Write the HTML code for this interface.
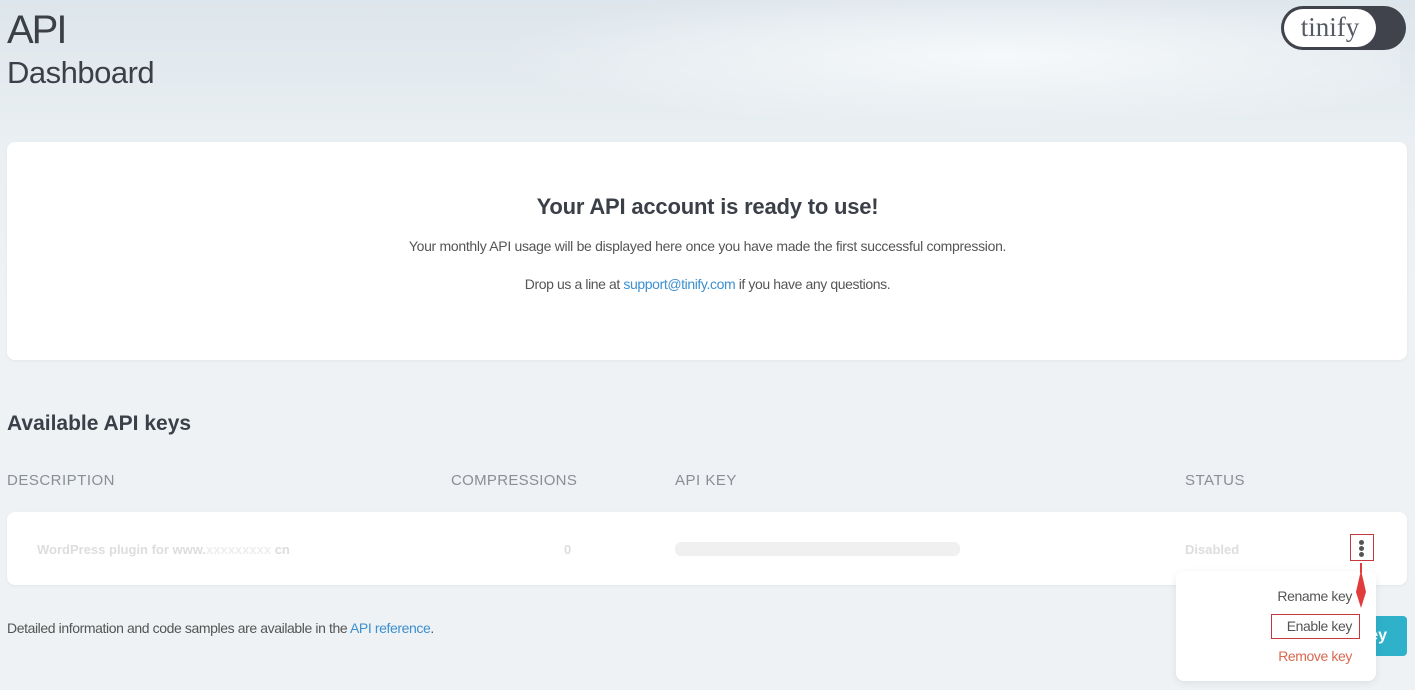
<!DOCTYPE html>
<html><head><meta charset="utf-8"><style>
*{box-sizing:border-box;margin:0;padding:0}
body{width:1415px;height:690px;overflow:hidden;font-family:"Liberation Sans",sans-serif;color:#3b3f48;background:linear-gradient(#dde6ec 0,#e9eff2 140px,#eef2f4 300px,#eef2f4 100%);position:relative}
.a{position:absolute}
.card{background:#fff;border-radius:8px;box-shadow:0 1px 3px rgba(0,0,0,.05)}
.n{letter-spacing:-0.4px}
</style></head><body>
<div class="a" style="left:400px;top:0;width:1000px;height:140px;background:radial-gradient(ellipse at 60% 40%,rgba(255,255,255,.7),rgba(255,255,255,0) 60%)"></div>
<div class="a" style="left:7px;top:8px;font-size:40px;letter-spacing:-2px">API</div>
<div class="a" style="left:7px;top:55px;font-size:31px;letter-spacing:-0.5px">Dashboard</div>
<div class="a" style="left:1281px;top:6px;width:125px;height:44px;border-radius:22px;background:#40434c"></div>
<div class="a" style="left:1284px;top:9px;width:92px;height:38px;border-radius:19px;background:#fff;font-family:'Liberation Serif',serif;font-size:27px;color:#555a63;text-align:center;line-height:36px">tinify</div>
<div class="a card" style="left:7px;top:142px;width:1400px;height:218px"></div>
<div class="a" style="left:0;width:1415px;top:194px;text-align:center;font-size:22px;font-weight:bold;letter-spacing:-0.2px">Your API account is ready to use!</div>
<div class="a n" style="left:0;width:1415px;top:238px;text-align:center;font-size:14px;color:#555;letter-spacing:-0.3px">Your monthly API usage will be displayed here once you have made the first successful compression.</div>
<div class="a n" style="left:0;width:1415px;top:276px;text-align:center;font-size:14px;color:#555">Drop us a line at <span style="color:#3c8fd0">support@tinify.com</span> if you have any questions.</div>
<div class="a" style="left:7px;top:412px;font-size:21px;font-weight:bold">Available API keys</div>
<div class="a" style="top:472px;left:7px;font-size:15px;color:#8a8e95;letter-spacing:0.5px">DESCRIPTION</div>
<div class="a" style="top:472px;left:451px;font-size:15px;color:#8a8e95;letter-spacing:0.3px">COMPRESSIONS</div>
<div class="a" style="top:472px;left:675px;font-size:15px;color:#8a8e95;letter-spacing:0.5px">API KEY</div>
<div class="a" style="top:472px;left:1185px;font-size:15px;color:#8a8e95;letter-spacing:0.5px">STATUS</div>
<div class="a card" style="left:7px;top:512px;width:1400px;height:73px"></div>
<div class="a" style="top:542px;left:37px;font-size:13px;color:#ddd;font-weight:bold">WordPress plugin for www.<span style="color:#eee">xxxxxxxxx</span> cn</div>
<div class="a" style="top:542px;left:564px;font-size:13px;color:#ddd;font-weight:bold">0</div>
<div class="a" style="top:542px;left:675px;width:285px;height:14px;background:#f0f0f0;border-radius:6px"></div>
<div class="a" style="top:542px;left:1185px;font-size:13px;color:#ddd;font-weight:bold">Disabled</div>
<div class="a" style="left:1350px;top:534px;width:24px;height:27px;border:1px solid #c8373a"></div>
<div class="a" style="left:1359px;top:540px;width:5px;height:5px;border-radius:50%;background:#555;box-shadow:0 6px 0 #555,0 12px 0 #555"></div>
<div class="a" style="left:1330px;top:616px;width:77px;height:40px;border-radius:4px;background:#2fb1c9;color:#fff;font-weight:bold;font-size:16px;line-height:40px;text-align:right;padding-right:20px">ey</div>
<div class="a card" style="left:1176px;top:571px;width:200px;height:110px;box-shadow:0 2px 8px rgba(0,0,0,.08)"></div>
<svg class="a" style="left:1353px;top:562px" width="16" height="50"><path d="M7 1h2v10h-2z" fill="#e23b3b"/><path d="M8 8L13 30L8 46L3 30Z" fill="#e23b3b"/></svg>
<div class="a n" style="right:63px;top:588px;font-size:14px;color:#555">Rename key</div>
<div class="a" style="left:1271px;top:614px;width:89px;height:25px;border:1px solid #c8373a"></div>
<div class="a n" style="right:63px;top:618px;font-size:14px;color:#555">Enable key</div>
<div class="a n" style="right:63px;top:648px;font-size:14px;color:#d9684f">Remove key</div>
<div class="a n" style="left:7px;top:620px;font-size:14px;color:#555">Detailed information and code samples are available in the <span style="color:#3c8fd0">API reference</span>.</div>
</body></html>
